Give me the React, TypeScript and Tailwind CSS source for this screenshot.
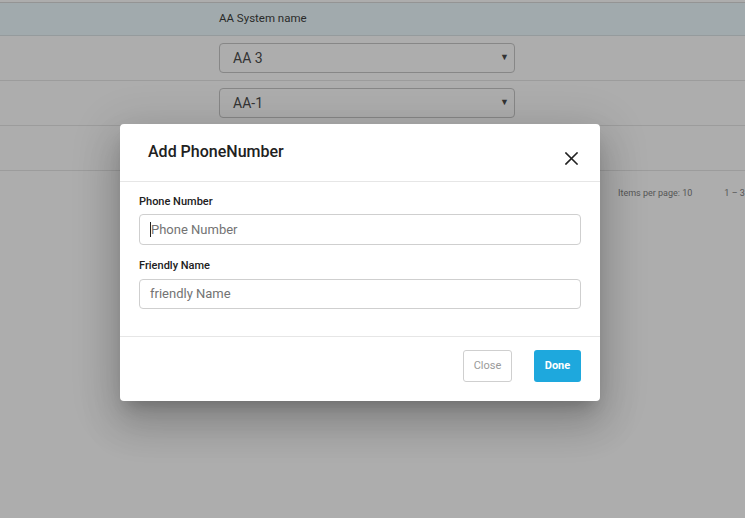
import React from "react";

function Row({ value }: { value: string }) {
  return (
    <div className="h-[45px] border-b border-[#9c9c9c] flex items-center pl-[219px]">
      <div className="w-[296px] h-[30px] border border-[#878787] rounded-[4px] flex items-center justify-between pl-[13px] pr-[5px]">
        <span className="text-[14px] text-[#333]">{value}</span>
        <span className="text-[9px] text-[#333]">▼</span>
      </div>
    </div>
  );
}

export default function App() {
  return (
    <div
      className="relative w-[745px] h-[518px] bg-[#adadad] overflow-hidden"
      style={{ fontFamily: "Roboto, 'Liberation Sans', sans-serif" }}
    >
      <div className="h-[3px] bg-[#adadad] border-b border-[#949494]" />
      <div className="h-[33px] bg-[#a1aaad] border-b border-[#959b9d] flex items-center pl-[219px]">
        <span className="text-[11.5px] text-[#2a2a2a]">AA System name</span>
      </div>
      <Row value="AA 3" />
      <Row value="AA-1" />
      <div className="h-[45px] border-b border-[#9c9c9c]" />
      <div className="flex pt-[16px] pl-[618px] gap-[32px] text-[9px] text-[#555] whitespace-nowrap">
        <span>Items per page: 10</span>
        <span>1 – 3</span>
      </div>

      <div className="absolute left-[120px] top-[124px] w-[480px] bg-white rounded-[4px] shadow-[0_11px_15px_-7px_rgba(0,0,0,0.2),0_24px_38px_3px_rgba(0,0,0,0.14),0_9px_46px_8px_rgba(0,0,0,0.12)]">
        <div className="h-[58px] border-b border-[#e6e6e6] flex items-center justify-between pl-[28px] pr-[22px]">
          <span className="text-[16px] font-medium text-[#212121] -mt-[2px]">Add PhoneNumber</span>
          <svg width="13" height="13" viewBox="0 0 13 13" className="mt-[11px]">
            <path d="M1 1 L12 12 M12 1 L1 12" stroke="#222" strokeWidth="1.6" strokeLinecap="square" />
          </svg>
        </div>
        <div className="px-[19px] pt-[13px] pb-[27px] flex flex-col">
          <label className="text-[11px] font-medium text-[#212121] leading-[14px] mb-[5px]">Phone Number</label>
          <div className="h-[31px] border border-[#cfcfcf] rounded-[4px] flex items-center pl-[10px]">
            <span className="w-px h-[15px] bg-[#222]" />
            <span className="text-[13px] text-[#737373]">Phone Number</span>
          </div>
          <label className="text-[11px] font-medium text-[#212121] leading-[14px] mt-[14px] mb-[6px]">Friendly Name</label>
          <div className="h-[30px] border border-[#cfcfcf] rounded-[4px] flex items-center pl-[10px]">
            <span className="text-[13px] text-[#737373]">friendly Name</span>
          </div>
        </div>
        <div className="border-t border-[#e6e6e6] h-[65px] flex items-start justify-end gap-[22px] pr-[19px] pt-[13px]">
          <button className="w-[49px] h-[32px] border border-[#cfcfcf] rounded-[3px] text-[11px] text-[#9a9a9a] bg-white">Close</button>
          <button className="w-[47px] h-[32px] rounded-[3px] text-[11px] font-bold text-white bg-[#1ea8dd]">Done</button>
        </div>
      </div>
    </div>
  );
}
